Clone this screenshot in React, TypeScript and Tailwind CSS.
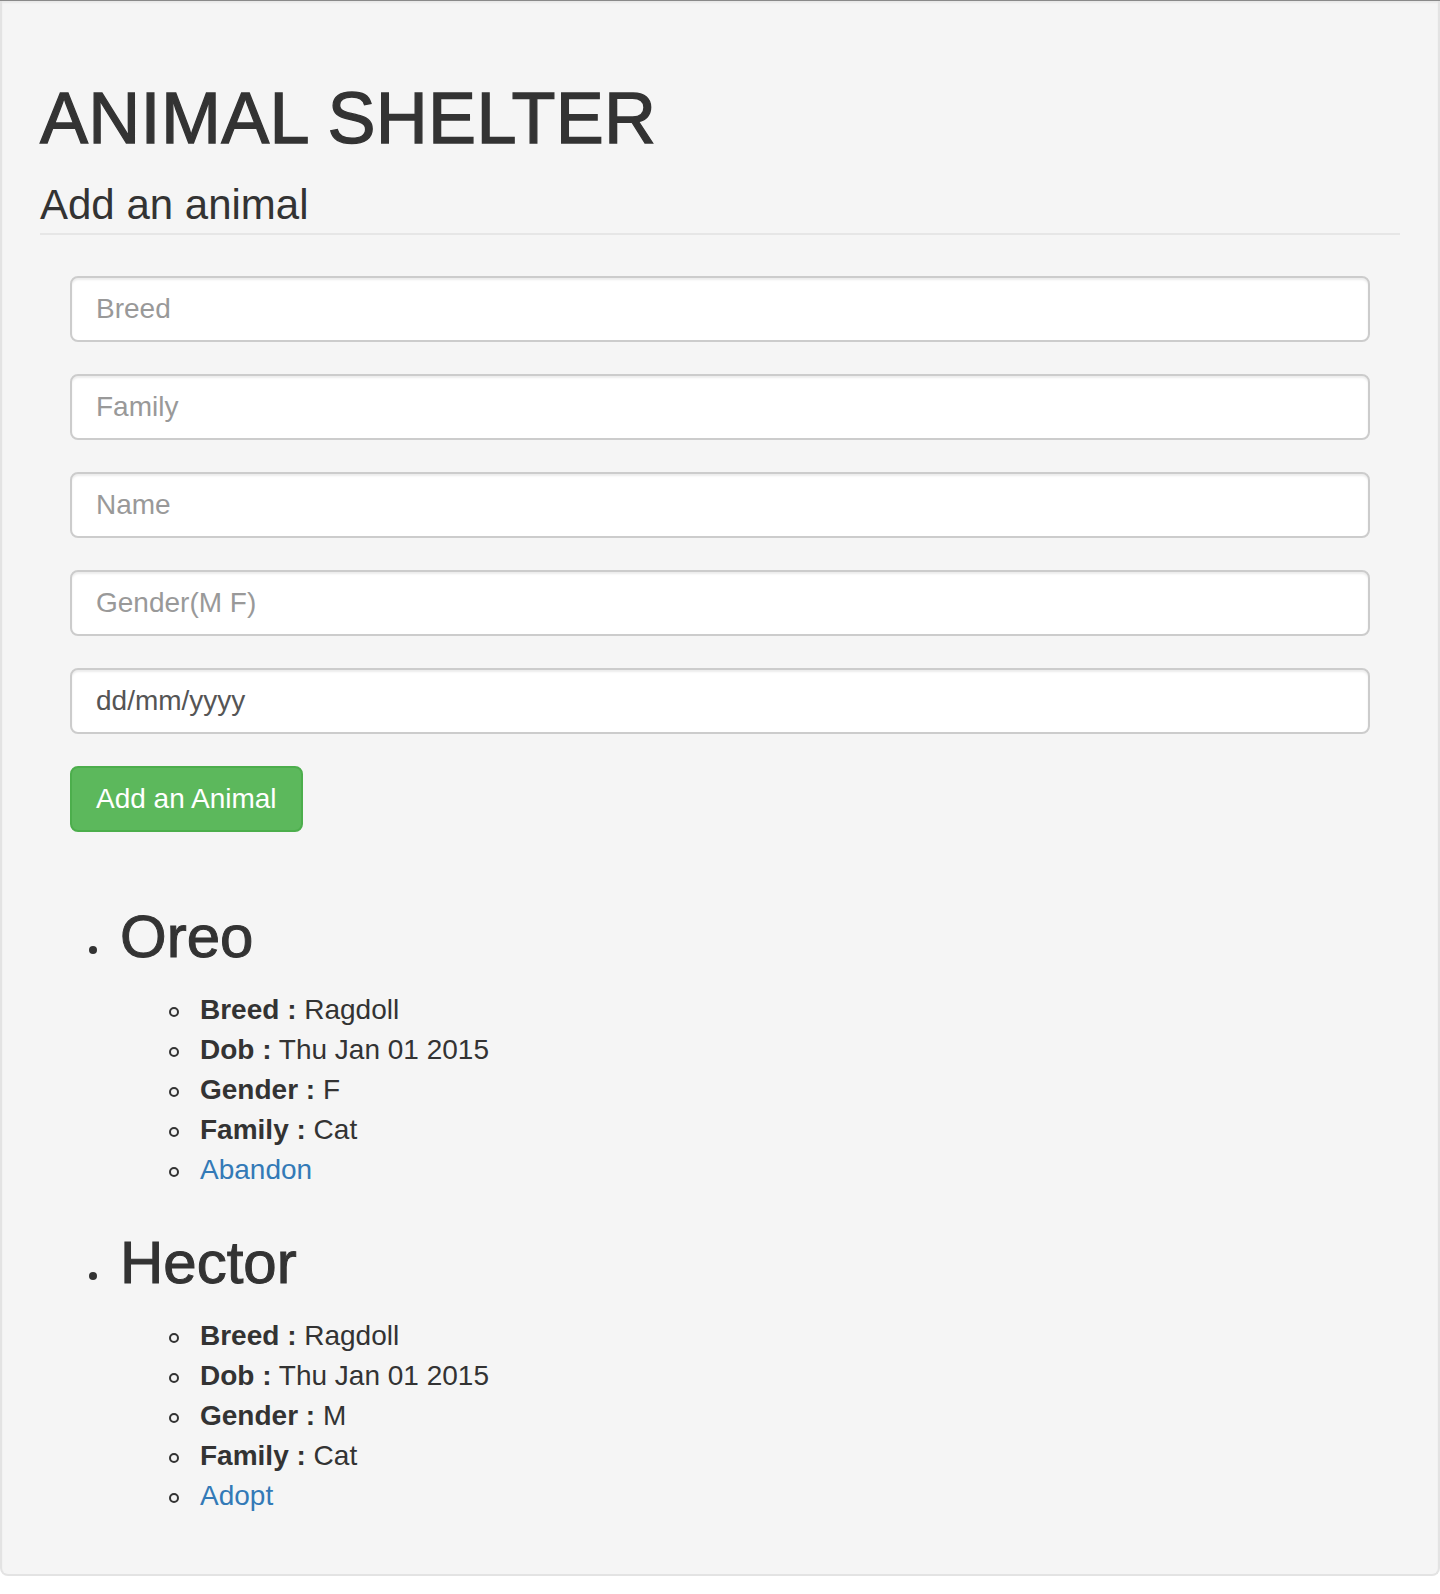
import React from "react";

type Animal = {
  name: string;
  breed: string;
  dob: string;
  gender: string;
  family: string;
  action: string;
};

const animals: Animal[] = [
  { name: "Oreo", breed: "Ragdoll", dob: "Thu Jan 01 2015", gender: "F", family: "Cat", action: "Abandon" },
  { name: "Hector", breed: "Ragdoll", dob: "Thu Jan 01 2015", gender: "M", family: "Cat", action: "Adopt" },
];

const fields = ["Breed", "Family", "Name", "Gender(M F)"];

const inputClass =
  "block w-full h-[66px] mb-[32px] px-[24px] bg-white border-2 border-[#ccc] rounded-[8px] text-[28px] text-[#555] shadow-[inset_0_2px_2px_rgba(0,0,0,0.075)] outline-none";

const Detail = ({ children }: { children: React.ReactNode }) => (
  <li className="flex items-center h-[40px]">
    <span className="w-[10px] h-[10px] mt-[4px] ml-[-31px] mr-[21px] shrink-0 rounded-full border-2 border-[#333]" />
    <span>{children}</span>
  </li>
);

export default function App() {
  return (
    <div
      className="min-h-screen bg-white border-t border-[#8a8a8a] text-[#333] text-[28px] leading-[40px]"
      style={{ fontFamily: '"Liberation Sans", Arial, sans-serif' }}
    >
      <div className="bg-[#f5f5f5] border-x-2 border-b-2 border-[#e3e3e3] rounded-b-[8px] px-[38px] pt-[78px] pb-[58px] shadow-[inset_0_2px_2px_rgba(0,0,0,0.05)]">
        <h1 className="text-[72px] leading-[79px] font-normal tracking-[0.3px] [-webkit-text-stroke:1.3px_#333]">
          ANIMAL SHELTER
        </h1>
        <h3 className="mt-[24px] text-[42px] leading-[46px] font-normal pb-[5px] border-b-2 border-[#e6e6e6]">
          Add an animal
        </h3>

        {/* add form */}
        <form className="mt-[41px] px-[30px]" onSubmit={(e) => e.preventDefault()}>
          {fields.map((field) => (
            <input key={field} type="text" placeholder={field} className={`${inputClass} placeholder:text-[#999]`} />
          ))}
          <input type="text" placeholder="dd/mm/yyyy" className={`${inputClass} placeholder:text-[#555]`} />
          <button
            type="submit"
            className="h-[66px] px-[24px] bg-[#5cb85c] border-2 border-[#4cae4c] rounded-[8px] text-white text-[28px] leading-[40px]"
          >
            Add an Animal
          </button>
        </form>

        {/* animal list */}
        <ul className="mt-[72px] pl-[80px]">
          {animals.map((animal, index) => (
            <li key={animal.name} className={index > 0 ? "mt-[40px]" : ""}>
              <div className="flex items-end">
                <span className="w-[8px] h-[8px] mb-[16px] ml-[-31px] mr-[23px] shrink-0 rounded-full bg-[#333]" />
                <h2 className="text-[60px] leading-[66px] font-normal [-webkit-text-stroke:1px_#333]">{animal.name}</h2>
              </div>
              <ul className="mt-[20px] pl-[80px]">
                <Detail>
                  <strong>Breed :</strong> {animal.breed}
                </Detail>
                <Detail>
                  <strong>Dob :</strong> {animal.dob}
                </Detail>
                <Detail>
                  <strong>Gender :</strong> {animal.gender}
                </Detail>
                <Detail>
                  <strong>Family :</strong> {animal.family}
                </Detail>
                <Detail>
                  <a href="#" className="text-[#337ab7]">
                    {animal.action}
                  </a>
                </Detail>
              </ul>
            </li>
          ))}
        </ul>
      </div>
    </div>
  );
}
